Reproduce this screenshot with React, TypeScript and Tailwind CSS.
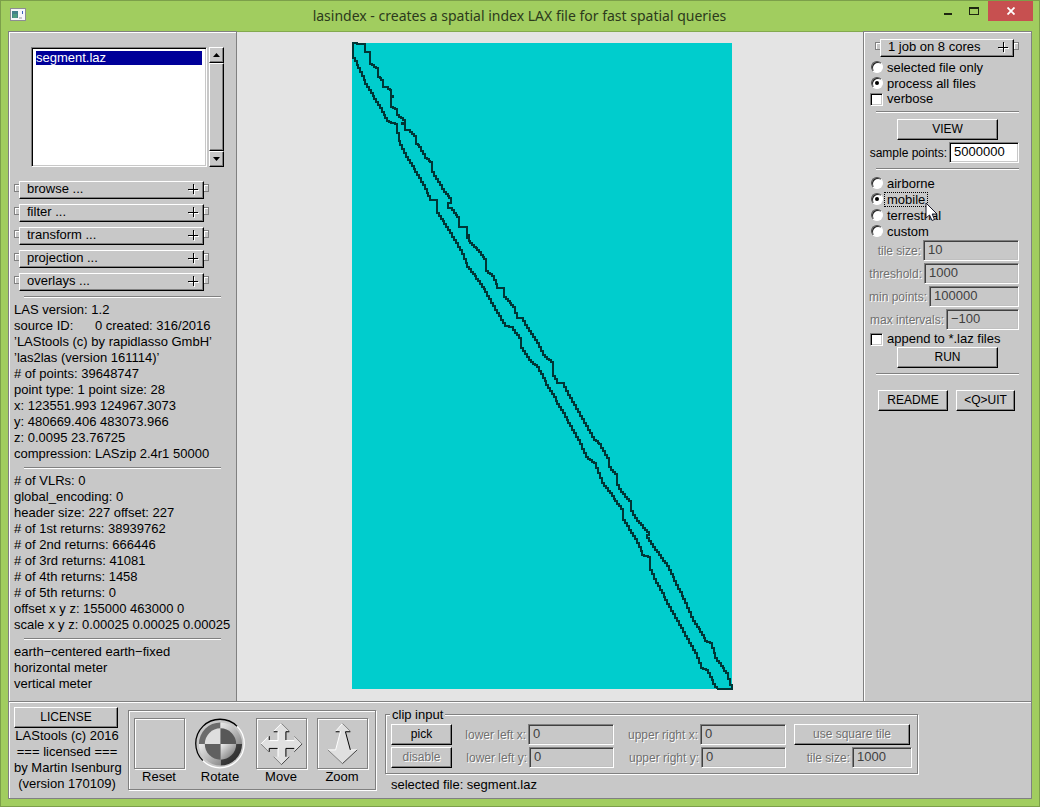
import { useState } from "react";
import type { ReactNode } from "react";

const RAISED =
  "border border-t-white border-l-white border-r-black border-b-black bg-[#c8c8c8] shadow-[inset_-1px_-1px_0_#808080]";
const SUNKEN =
  "border border-t-[#808080] border-l-[#808080] border-r-white border-b-white shadow-[inset_1px_1px_0_#000,inset_-1px_-1px_0_#c8c8c8]";
const SUNKEN_OFF =
  "border border-t-[#808080] border-l-[#808080] border-r-white border-b-white shadow-[inset_1px_1px_0_#404040,inset_-1px_-1px_0_#c0c0c0]";
const ENGRAVED =
  "border border-[#808080] shadow-[inset_1px_1px_0_#fff,1px_1px_0_#fff]";
const OFF_TEXT = "text-[#707070] [text-shadow:1px_1px_0_#fff]";

const menus = ["browse ...", "filter ...", "transform ...", "projection ...", "overlays ..."];

const headerInfo = [
  "LAS version: 1.2",
  "source ID:      0 created: 316/2016",
  "’LAStools (c) by rapidlasso GmbH’",
  "’las2las (version 161114)’",
  "# of points: 39648747",
  "point type: 1 point size: 28",
  "x: 123551.993 124967.3073",
  "y: 480669.406 483073.966",
  "z: 0.0095 23.76725",
  "compression: LASzip 2.4r1 50000",
];

const returnInfo = [
  "# of VLRs: 0",
  "global_encoding: 0",
  "header size: 227 offset: 227",
  "# of 1st returns: 38939762",
  "# of 2nd returns: 666446",
  "# of 3rd returns: 41081",
  "# of 4th returns: 1458",
  "# of 5th returns: 0",
  "offset x y z: 155000 463000 0",
  "scale x y z: 0.00025 0.00025 0.00025",
];

const projectionInfo = ["earth−centered earth−fixed", "horizontal meter", "vertical meter"];

const indexFields = [
  { id: "tile", label: "tile size:", value: "10", width: "w-[96px]" },
  { id: "threshold", label: "threshold:", value: "1000", width: "w-[95px]" },
  { id: "minpoints", label: "min points:", value: "100000", width: "w-[90px]" },
  { id: "maxintervals", label: "max intervals:", value: "−100", width: "w-[73px]" },
];

// outline of the flight strip, clockwise from the top left corner
const rightEdge = [
  [1, 11], [1, 0], [5, 0], [5, 1], [13, 1], [13, 9], [18, 9], [18, 19], [26, 25], [26, 32], [31, 37], [31, 44], [36, 44],
  [39, 47], [39, 52], [41, 53], [39, 54], [39, 63], [45, 66], [45, 70], [53, 77], [53, 79], [50, 80],
  [53, 81], [53, 87], [58, 87], [64, 93], [64, 99], [69, 104], [75, 115], [80, 119], [80, 126],
  [88, 139], [94, 149], [99, 155], [99, 159], [96, 160], [96, 165], [100, 165], [107, 174], [109, 184],
  [115, 184], [117, 192], [115, 193], [120, 200], [127, 207], [134, 216], [134, 226], [142, 233],
  [147, 245], [152, 245], [152, 252], [163, 264], [167, 275], [171, 275], [179, 288], [187, 300],
  [193, 312], [201, 319], [201, 329], [207, 340], [212, 340], [218, 352], [244, 397], [249, 401],
  [257, 415], [257, 422], [265, 431], [265, 439], [271, 449], [279, 458], [279, 465], [287, 478],
  [297, 489], [295, 492], [301, 501], [317, 523], [326, 542], [335, 560], [343, 578], [350, 589],
  [355, 598], [360, 600], [365, 615], [376, 630], [380, 642], [380, 646], [365, 646],
];
const leftEdge = [
  [1, 11], [8, 25], [15, 41], [26, 59], [37, 78], [45, 81], [48, 98], [56, 114], [69, 135], [80, 157],
  [85, 157], [85, 167], [98, 187], [110, 207], [117, 224], [128, 238], [135, 249], [145, 267],
  [155, 283], [161, 284], [169, 295], [169, 302], [179, 317], [187, 324], [198, 345], [211, 367],
  [218, 380], [228, 397], [236, 414], [244, 420], [252, 440], [271, 466], [271, 474], [285, 496],
  [292, 512], [298, 514], [298, 522], [306, 540], [319, 564], [333, 589], [345, 610], [351, 625],
  [356, 627], [365, 644], [365, 646],
];

// joins the points with small right-angled steps
function stairs(points: number[][]) {
  let d = `M${points[0][0]} ${points[0][1]}`;
  for (let i = 1; i < points.length; i++) {
    const [x0, y0] = points[i - 1];
    const [x1, y1] = points[i];
    const n = Math.max(1, Math.round(Math.abs(x1 - x0) / 2));
    for (let k = 1; k <= n; k++) {
      const x = Math.round(x0 + ((x1 - x0) * k) / n);
      const y = Math.round(y0 + ((y1 - y0) * k) / n);
      d += `V${y}H${x}`;
    }
  }
  return d;
}

function Rule({ className = "" }: { className?: string }) {
  return <div className={`h-[2px] border-t border-b border-t-[#808080] border-b-white ${className}`} />;
}

function Nub({ side }: { side: "left" | "right" }) {
  return (
    <span
      className={`mb-1 h-2 w-[5px] shrink-0 border border-[#808080] shadow-[inset_1px_1px_0_#fff] ${
        side === "left" ? "border-r-0" : "border-l-0"
      }`}
    />
  );
}

function Rollup({ label }: { label: string }) {
  return (
    <div className="flex items-center">
      <Nub side="left" />
      <button className={`flex h-[18px] flex-1 items-center justify-between pr-1 pb-[2px] pl-[7px] ${RAISED}`}>
        <span className="leading-4">{label}</span>
        <svg width="11" height="11" viewBox="0 0 11 11" shapeRendering="crispEdges">
          <path d="M1 6.5H11M6.5 1V11" stroke="#fff" />
          <path d="M0 5.5H10M5.5 0V10" stroke="#000" />
        </svg>
      </button>
      <Nub side="right" />
    </div>
  );
}

function PushButton({ children, className = "", disabled }: { children: ReactNode; className?: string; disabled?: boolean }) {
  return (
    <button
      disabled={disabled}
      className={`h-[21px] pb-[2px] text-xs leading-4 ${RAISED} ${disabled ? OFF_TEXT : ""} ${className}`}
    >
      {children}
    </button>
  );
}

function Field({ id, label, value, width }: { id: string; label: string; value: string; width: string }) {
  return (
    <div className="flex items-center justify-end gap-[2px]">
      <label htmlFor={id} className={`whitespace-nowrap text-xs leading-4 ${OFF_TEXT}`}>
        {label}
      </label>
      <input
        id={id}
        disabled
        defaultValue={value}
        className={`h-[21px] shrink-0 bg-[#c8c8c8] pb-[2px] pl-1 text-[#404040] ${width} ${SUNKEN_OFF}`}
      />
    </div>
  );
}

function Radio({ name, label, checked, onPick, focused }: {
  name: string;
  label: string;
  checked: boolean;
  onPick: () => void;
  focused?: boolean;
}) {
  return (
    <div className="relative flex h-4 items-center gap-[1px]">
      <input
        type="radio"
        id={label}
        name={name}
        checked={checked}
        onChange={onPick}
        className="flex size-3 appearance-none items-center justify-center rounded-full border border-t-[#505050] border-l-[#505050] border-r-white border-b-white bg-white shadow-[inset_1px_1px_0_#222] before:size-1 before:rounded-full checked:before:bg-black"
      />
      <label
        htmlFor={label}
        className={`border border-dotted pr-[2px] pl-[2px] leading-[13px] ${focused ? "border-black" : "border-transparent"}`}
      >
        {label}
      </label>
      {focused && (
        <svg className="absolute top-[11px] left-[54px] z-10" width="14" height="20" viewBox="0 0 14 20">
          <path d="M1 1V16L4.500 13L7 18.500L9.500 17.500L7.200 12H12Z" fill="#fff" stroke="#1a1a2a" />
        </svg>
      )}
    </div>
  );
}

function Check({ label }: { label: string }) {
  return (
    <div className="flex h-4 items-center gap-[2px]">
      <input
        type="checkbox"
        id={label}
        className={`size-[13px] appearance-none bg-white checked:bg-black ${SUNKEN}`}
      />
      <label htmlFor={label} className="pl-[2px] leading-4">
        {label}
      </label>
    </div>
  );
}

function Lines({ rows }: { rows: string[] }) {
  return (
    <div className="pl-[5px]">
      {rows.map((row) => (
        <p key={row} className="h-4 whitespace-pre leading-4">
          {row}
        </p>
      ))}
    </div>
  );
}

function BallIcon() {
  return (
    <svg width="52" height="52" viewBox="0 0 52 52">
      <defs>
        <linearGradient id="quad" x1="0" y1="0" x2="1" y2="1">
          <stop offset="0" stopColor="#f0f0f0" />
          <stop offset="1" stopColor="#606060" />
        </linearGradient>
        <linearGradient id="ring" x1="0" y1="0" x2="1" y2="1">
          <stop offset="0" stopColor="#ececec" />
          <stop offset="1" stopColor="#8c8c8c" />
        </linearGradient>
        <linearGradient id="dark" x1="0" y1="0" x2="1" y2="1">
          <stop offset="0" stopColor="#505050" />
          <stop offset="1" stopColor="#222" />
        </linearGradient>
      </defs>
      <path d="M8 43A24.500 24.500 0 0 1 43 8" fill="none" stroke="#000" strokeWidth="1.300" />
      <path d="M43 8A24.500 24.500 0 0 1 8 43" fill="none" stroke="#fff" strokeWidth="1.300" />
      <path d="M26 26V4A22 22 0 0 0 4 26Z" fill="#6c6c6c" />
      <path d="M26 26V4A22 22 0 0 1 48 26Z" fill="url(#ring)" />
      <path d="M26 26H48A22 22 0 0 1 26 48Z" fill="url(#dark)" />
      <path d="M26 26H4A22 22 0 0 0 26 48Z" fill="url(#ring)" />
      <path d="M26 26V10A16 16 0 0 0 10 26Z" fill="#dedede" />
      <path d="M26 26V10A16 16 0 0 1 42 26Z" fill="#585858" />
      <path d="M26 26H42A16 16 0 0 1 26 42Z" fill="url(#quad)" />
      <path d="M26 26H10A16 16 0 0 0 26 42Z" fill="#606060" />
    </svg>
  );
}

function MoveIcon() {
  return (
    <svg width="50" height="50" viewBox="1 1 50 50">
      <path
        d="M26 5L34 13H30V22H39V18L47 26L39 34V30H30V39H34L26 47L18 39H22V30H13V34L5 26L13 18V22H22V13H18Z"
        fill="#e0e0e0"
      />
      <path d="M18 13L26 5M5 26L13 18M22.500 13V22.500H13M22.500 30V39M39 22.500H30M39 18L47 26" fill="none" stroke="#fff" />
      <path d="M26 5L34 13M5 26L13 34M39 18L47 26M18 39L26 47" fill="none" stroke="#808080" />
      <path d="M18 13.500H22M13.500 18V22M34 13.500H30.500V22M13.500 34V30.500H22M39 30.500H30.500V39" fill="none" stroke="#000" />
      <path d="M39 34L47 26M26 47L34 39" fill="none" stroke="#404040" />
    </svg>
  );
}

function ZoomIcon() {
  return (
    <svg width="50" height="50" viewBox="1 1 50 50">
      <path d="M26 5L34 13H29L34 32H41L26 46L11 32H19L24 13H19Z" fill="#e0e0e0" />
      <path d="M19 13L26 5M24 13L19 32H11M34 32H41" fill="none" stroke="#fff" />
      <path d="M26 5L34 13M11 32L26 46" fill="none" stroke="#808080" />
      <path d="M19 13.500H23M34 13.500H29L34 32" fill="none" stroke="#000" />
      <path d="M41 32L26 46" fill="none" stroke="#404040" />
    </svg>
  );
}

function Tool({ label, children, round }: { label: string; children?: ReactNode; round?: boolean }) {
  return (
    <button className="flex w-[52px] flex-col items-center">
      <span className={`flex size-[51px] items-center justify-center ${round ? "" : ENGRAVED}`}>{children}</span>
      <span className="leading-4">{label}</span>
    </button>
  );
}

function TitleBar() {
  return (
    <header className="flex h-[30px] items-start pl-[9px]">
      <svg className="mt-[7px]" width="16" height="14" viewBox="0 0 16 14">
        <rect x="0.500" y="0.500" width="15" height="12" fill="#f6f6fa" stroke="#8d8d93" />
        <rect x="2" y="3" width="6" height="7" fill="#43808a" />
        <rect x="3" y="6" width="4" height="4" fill="#4e9c80" />
        <rect x="12" y="3" width="1" height="3" fill="#3b62b8" />
        <rect x="9" y="9" width="3" height="2" fill="#c8c8c8" />
      </svg>
      <h1 className="flex-1 pl-[78px] text-center font-['Noto_Sans','Open_Sans',sans-serif] text-[14px] leading-[30px] text-[#2c3a1c]">
        lasindex - creates a spatial index LAX file for fast spatial queries
      </h1>
      <button aria-label="Minimize" className="flex h-5 w-[26px] items-center justify-center">
        <span className="mt-[5px] h-[2px] w-2 bg-[#1e2610]" />
      </button>
      <button aria-label="Maximize" className="flex h-5 w-[26px] items-center justify-center">
        <span className="h-2 w-[10px] border border-t-2 border-[#1e2610]" />
      </button>
      <button aria-label="Close" className="mr-[6px] ml-[1px] flex h-5 w-[45px] items-center justify-center bg-[#c75050]">
        <svg width="8" height="8" viewBox="0 0 8 8">
          <path d="M0.500 0.500L7.500 7.500M7.500 0.500L0.500 7.500" stroke="#fff" strokeWidth="1.800" />
        </svg>
      </button>
    </header>
  );
}

export default function App() {
  const [scope, setScope] = useState("process all files");
  const [mode, setMode] = useState("mobile");

  return (
    <div className="flex min-h-screen flex-col border border-[#7c9f4a] bg-[#a1cd5f] font-['Liberation_Sans',Arial,sans-serif] text-[13px] text-black">
      <TitleBar />
      <div className="mx-[7px] mb-[7px] flex flex-1 flex-col bg-[#c8c8c8]">
        <div className="flex flex-1">
          <aside className="w-[229px] shrink-0 border-t border-r border-l border-[#808080] pt-[15px] shadow-[inset_1px_1px_0_#fff]">
            <div className="flex gap-[2px] pl-[22px]">
              <ul role="listbox" className={`h-[120px] w-[176px] bg-white p-1 pt-[3px] ${SUNKEN}`}>
                <li role="option" aria-selected="true" className="h-[14px] bg-[#000099] leading-[13px] text-white">
                  segment.laz
                </li>
              </ul>
              <div className="flex w-[15px] flex-col">
                <button aria-label="Scroll up" className={`flex h-4 items-center justify-center ${RAISED}`}>
                  <svg width="7" height="4" viewBox="0 0 7 4"><path d="M3.500 0L7 4H0Z" /></svg>
                </button>
                <div className={`flex-1 ${RAISED}`} />
                <button aria-label="Scroll down" className={`flex h-4 items-center justify-center ${RAISED}`}>
                  <svg width="7" height="4" viewBox="0 0 7 4"><path d="M0 0H7L3.500 4Z" /></svg>
                </button>
              </div>
            </div>
            <nav className="mt-[14px] mr-[27px] ml-[5px] flex flex-col gap-[5px]">
              {menus.map((m) => (
                <Rollup key={m} label={m} />
              ))}
            </nav>
            <Rule className="mt-[5px] mr-[15px] mb-1 ml-[15px]" />
            <Lines rows={headerInfo} />
            <Rule className="mt-[5px] mr-[15px] mb-1 ml-[15px]" />
            <Lines rows={returnInfo} />
            <Rule className="mt-[5px] mr-[15px] mb-1 ml-[15px]" />
            <Lines rows={projectionInfo} />
          </aside>

          <main className="flex flex-1 justify-center bg-[#e4e4e4] pt-3 pr-4 shadow-[inset_0_1px_0_#83a94e]">
            <svg className="h-[646px] w-[380px] overflow-visible" viewBox="0 0 380 646" shapeRendering="crispEdges">
              <rect width="380" height="646" fill="#00cdcd" />
              <path d={stairs(rightEdge)} fill="none" stroke="#003636" strokeWidth="2" />
              <path d={stairs(leftEdge)} fill="none" stroke="#003636" strokeWidth="2" />
            </svg>
          </main>

          <aside className="w-[169px] shrink-0 border-t border-r border-l border-[#808080] pt-[7px] pr-3 pl-[5px] shadow-[inset_1px_1px_0_#fff]">
            <div className="ml-[6px]">
              <Rollup label="1 job on 8 cores" />
            </div>
            <div className="mt-[2px] pl-[2px]">
              <Radio name="scope" label="selected file only" checked={scope === "selected file only"} onPick={() => setScope("selected file only")} />
              <Radio name="scope" label="process all files" checked={scope === "process all files"} onPick={() => setScope("process all files")} />
            </div>
            <div className="pl-[1px]">
              <Check label="verbose" />
            </div>
            <Rule className="mt-1 mb-[6px] ml-[7px]" />
            <PushButton className="ml-7 block w-[101px]">VIEW</PushButton>
            <div className="mt-[2px] flex items-center justify-end gap-[2px]">
              <label htmlFor="sample" className="whitespace-nowrap text-xs leading-4">sample points:</label>
              <input id="sample" defaultValue="5000000" className={`h-[21px] w-[70px] shrink-0 bg-white pb-[2px] pl-1 ${SUNKEN}`} />
            </div>
            <Rule className="mt-[5px] mb-[5px] ml-[7px]" />
            <div className="pl-[2px]">
              {["airborne", "mobile", "terrestrial", "custom"].map((m) => (
                <Radio key={m} name="mode" label={m} checked={mode === m} onPick={() => setMode(m)} focused={m === "mobile"} />
              ))}
            </div>
            <div className="mt-[1px] flex flex-col gap-[2px]">
              {indexFields.map((f) => (
                <Field key={f.id} {...f} />
              ))}
            </div>
            <div className="mt-[1px] pl-[1px]">
              <Check label="append to *.laz files" />
            </div>
            <PushButton className="ml-7 block w-[101px]">RUN</PushButton>
            <Rule className="mt-[5px] mb-[15px] ml-[7px]" />
            <div className="flex gap-2 pl-[9px]">
              <PushButton className="w-[70px]">README</PushButton>
              <PushButton className="w-[59px]">&lt;Q&gt;UIT</PushButton>
            </div>
          </aside>
        </div>

        <footer className="flex items-start border border-[#808080] pb-[5px] shadow-[inset_1px_1px_0_#fff]">
          <div className="mt-[5px] ml-[5px] w-[106px] shrink-0 text-center leading-4 whitespace-nowrap">
            <PushButton className="block w-[104px]">LICENSE</PushButton>
            <p>LAStools (c) 2016</p>
            <p>=== licensed ===</p>
            <p>by Martin Isenburg</p>
            <p>(version 170109)</p>
          </div>
          <div className={`mt-2 ml-2 flex h-20 shrink-0 gap-[9px] pt-[7px] pr-[7px] pl-1 ${ENGRAVED}`}>
            <Tool label="Reset" />
            <Tool label="Rotate" round><BallIcon /></Tool>
            <Tool label="Move"><MoveIcon /></Tool>
            <Tool label="Zoom"><ZoomIcon /></Tool>
          </div>
          <div className="mt-[5px] ml-[9px]">
            <fieldset className={`relative mt-[7px] flex h-[60px] items-start pt-[9px] pr-[5px] pl-[5px] ${ENGRAVED}`}>
              <legend className="absolute -top-2 left-1 bg-[#c8c8c8] px-[2px] leading-4">clip input</legend>
              <div className="flex flex-col gap-[2px]">
                <PushButton className="w-[61px]">pick</PushButton>
                <PushButton className="w-[61px]" disabled>disable</PushButton>
              </div>
              <div className="flex w-[162px] flex-col gap-[2px]">
                <Field id="llx" label="lower left x:" value="0" width="w-[86px]" />
                <Field id="lly" label="lower left y:" value="0" width="w-[85px]" />
              </div>
              <div className="flex w-[172px] flex-col gap-[2px]">
                <Field id="urx" label="upper right x:" value="0" width="w-[86px]" />
                <Field id="ury" label="upper right y:" value="0" width="w-[85px]" />
              </div>
              <div className="ml-2 flex w-[118px] flex-col gap-[2px]">
                <PushButton className="w-[116px]" disabled>use square tile</PushButton>
                <Field id="square" label="tile size:" value="1000" width="w-[60px]" />
              </div>
            </fieldset>
            <p className="mt-[3px] pl-[6px] leading-4">selected file: segment.laz</p>
          </div>
        </footer>
      </div>
    </div>
  );
}
